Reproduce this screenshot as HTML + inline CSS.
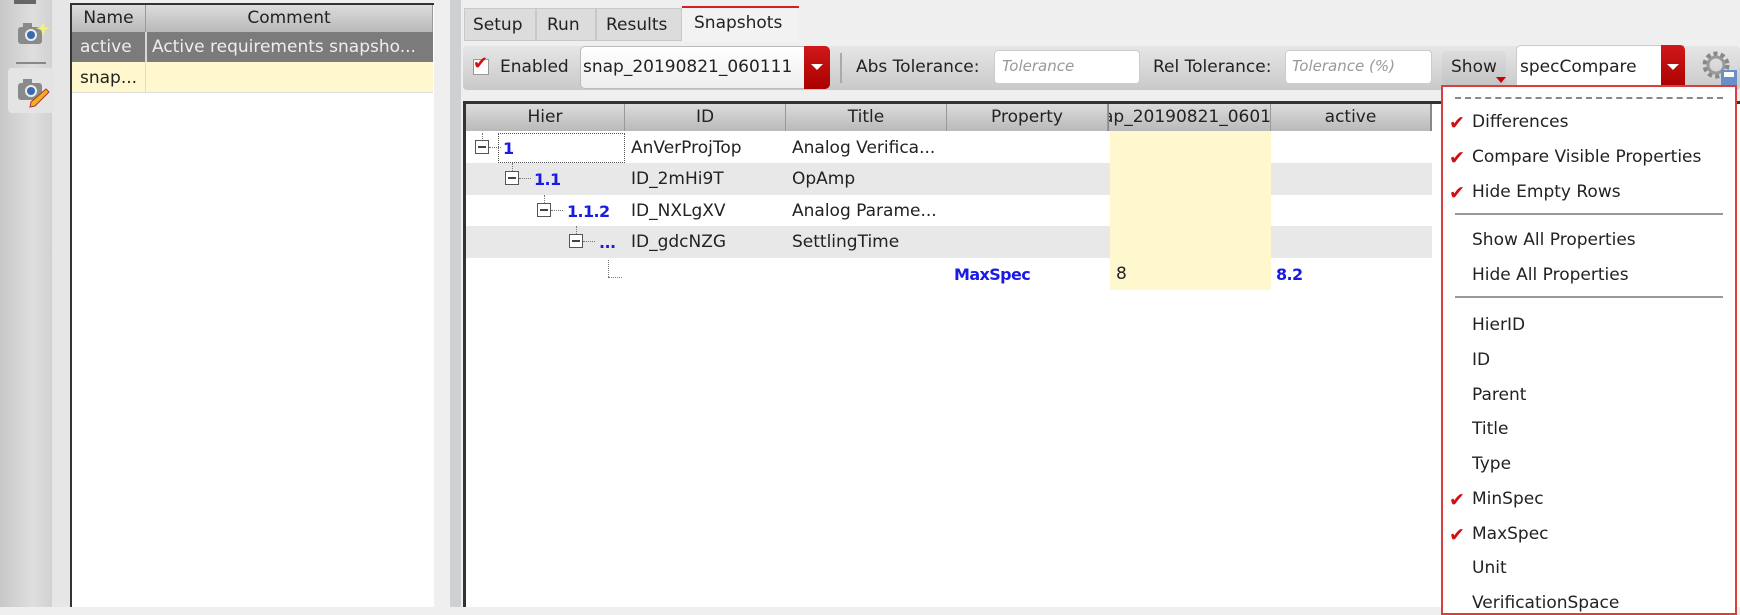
<!DOCTYPE html>
<html><head><meta charset="utf-8"><style>
*{box-sizing:border-box;margin:0;padding:0}
body{width:1740px;height:607px;overflow:hidden;background:#efefef;font-family:"DejaVu Sans","Liberation Sans",sans-serif;font-size:17px;color:#222;position:relative}
.a{position:absolute}
.t{position:absolute;white-space:nowrap;line-height:1}
.hd{background:linear-gradient(#dcdcdc,#b9b9b9);border-right:1px solid #999;text-align:center;line-height:27px;height:27px}
.b{color:#1a1ae6;font-weight:bold;font-size:16px;letter-spacing:-0.6px}
.box{position:absolute;width:14px;height:14px;border:1px solid #555;background:#fff}
.box:after{content:"";position:absolute;left:2px;right:2px;top:5px;height:2px;background:#444}
.dv{position:absolute;border-left:1px dotted #777}
.dh{position:absolute;border-top:1px dotted #777}
.mi{position:absolute;left:1472px;white-space:nowrap;line-height:1}
.ck{position:absolute;left:1449px;color:#d01010;font-size:19px;font-weight:bold}
.sep{position:absolute;left:1455px;width:268px;height:2px;background:#999}
</style></head><body>
<div class="a" style="left:0;top:0;width:55px;height:607px;background:linear-gradient(90deg,#c8c8c8,#dedede 60%,#cfcfcf)"></div>
<div class="a" style="left:52px;top:0;width:18px;height:607px;background:#e6e6e6"></div>
<div class="a" style="left:14px;top:0;width:22px;height:4px;background:#666"></div>
<svg class="a" style="left:16px;top:18px" width="36" height="32"><rect x="2" y="9" width="24" height="17" rx="3" fill="#8a8a8a"/><rect x="7" y="5" width="9" height="5" fill="#8a8a8a"/><circle cx="15" cy="17" r="6" fill="#eee"/><circle cx="15" cy="17" r="4" fill="#3a6ab0"/><path d="M27 4l2 5 5 1-5 2-2 6-2-6-5-2 5-1z" fill="#f4f080"/></svg>
<div class="a" style="left:16px;top:62px;width:30px;height:2px;background:#888"></div>
<div class="a" style="left:8px;top:68px;width:46px;height:45px;background:#e4e4e4;border-radius:4px"></div>
<svg class="a" style="left:16px;top:75px" width="36" height="34"><rect x="2" y="8" width="24" height="17" rx="3" fill="#8a8a8a"/><rect x="7" y="4" width="9" height="5" fill="#8a8a8a"/><circle cx="15" cy="16" r="6" fill="#eee"/><circle cx="15" cy="16" r="4" fill="#3a6ab0"/><path d="M30 14l3 3-14 14-5 1 1-5z" fill="#f0b020" stroke="#a33" stroke-width="1"/></svg>
<div class="a" style="left:70px;top:3px;width:364px;height:604px;background:#fff;border-left:2px solid #333;border-top:2px solid #333"></div>
<div class="a hd" style="left:72px;top:5px;width:74px">Name</div>
<div class="a hd" style="left:146px;top:5px;width:287px">Comment</div>
<div class="a" style="left:72px;top:32px;width:361px;height:30px;background:#7b7b7b"></div>
<div class="a" style="left:145px;top:32px;width:2px;height:61px;background:#d8d8d8"></div>
<div class="t" style="left:80px;top:39px;color:#eee">active</div>
<div class="t" style="left:152px;top:39px;color:#eee">Active requirements snapsho...</div>
<div class="a" style="left:72px;top:62px;width:361px;height:31px;background:#fff8cf;border-bottom:1px solid #ddd"></div>
<div class="a" style="left:145px;top:62px;width:1px;height:31px;background:#ddd"></div>
<div class="t" style="left:80px;top:70px">snap...</div>
<div class="a" style="left:434px;top:0;width:17px;height:607px;background:#efefef"></div>
<div class="a" style="left:450px;top:0;width:11px;height:607px;background:#cfd0d2"></div>
<div class="a" style="left:461px;top:0;width:1279px;height:607px;background:#efefef"></div>
<div class="a" style="left:464px;top:8px;width:72px;height:33px;background:#dcdcdc;border:1px solid #c8c8c8"></div>
<div class="a" style="left:536px;top:8px;width:60px;height:33px;background:#dcdcdc;border:1px solid #c8c8c8"></div>
<div class="a" style="left:596px;top:8px;width:86px;height:33px;background:#dcdcdc;border:1px solid #c8c8c8"></div>
<div class="a" style="left:682px;top:6px;width:117px;height:36px;background:#f2f2f2;border-top:2px solid #d42020"></div>
<div class="t" style="left:473px;top:17px">Setup</div>
<div class="t" style="left:547px;top:17px">Run</div>
<div class="t" style="left:606px;top:17px">Results</div>
<div class="t" style="left:694px;top:15px">Snapshots</div>
<div class="a" style="left:463px;top:46px;width:1277px;height:44px;background:linear-gradient(#e6e6e6,#c9c9c9);border-radius:4px"></div>
<div class="a" style="left:473px;top:59px;width:16px;height:16px;background:#fff;border:1px solid #999"></div>
<div class="t" style="left:473px;top:55px;color:#d01010;font-weight:bold;font-size:18px">✔</div>
<div class="t" style="left:500px;top:59px">Enabled</div>
<div class="a" style="left:580px;top:46px;width:250px;height:43px;background:linear-gradient(#fff,#eee);border:1px solid #bbb;border-radius:5px"></div>
<div class="a" style="left:804px;top:46px;width:26px;height:43px;background:linear-gradient(#d01818,#a00);border-radius:0 5px 5px 0"></div>
<div class="a" style="left:811px;top:64px;width:0;height:0;border-left:6px solid transparent;border-right:6px solid transparent;border-top:6px solid #fff"></div>
<div class="t" style="left:583px;top:59px">snap_20190821_060111</div>
<div class="a" style="left:840px;top:53px;width:2px;height:30px;background:#aaa"></div>
<div class="t" style="left:856px;top:59px">Abs Tolerance:</div>
<div class="a" style="left:994px;top:50px;width:146px;height:34px;background:#fff;border:1px solid #ccc;border-radius:4px"></div>
<div class="t" style="left:1002px;top:59px;color:#999;font-style:italic;font-size:15px">Tolerance</div>
<div class="t" style="left:1153px;top:59px">Rel Tolerance:</div>
<div class="a" style="left:1285px;top:50px;width:147px;height:34px;background:#fff;border:1px solid #ccc;border-radius:4px"></div>
<div class="t" style="left:1292px;top:59px;color:#999;font-style:italic;font-size:15px">Tolerance (%)</div>
<div class="a" style="left:1442px;top:51px;width:64px;height:34px;background:linear-gradient(#ddd,#c4c4c4);border-radius:5px"></div>
<div class="t" style="left:1451px;top:59px">Show</div>
<div class="a" style="left:1496px;top:77px;width:0;height:0;border-left:5px solid transparent;border-right:5px solid transparent;border-top:6px solid #c00"></div>
<div class="a" style="left:1516px;top:45px;width:168px;height:44px;background:#fff;border:1px solid #ccc;border-radius:5px 0 0 5px"></div>
<div class="a" style="left:1661px;top:45px;width:24px;height:44px;background:linear-gradient(#d01818,#a00);border-radius:0 5px 0 0"></div>
<div class="a" style="left:1667px;top:64px;width:0;height:0;border-left:6px solid transparent;border-right:6px solid transparent;border-top:6px solid #fff"></div>
<div class="t" style="left:1520px;top:59px">specCompare</div>
<svg class="a" style="left:1699px;top:48px" width="40" height="40"><circle cx="17" cy="17" r="11" fill="none" stroke="#888" stroke-width="5" stroke-dasharray="4 3"/><circle cx="17" cy="17" r="8" fill="none" stroke="#999" stroke-width="3"/><rect x="22" y="22" width="16" height="16" fill="#6a8ec8"/><rect x="25" y="24" width="10" height="5" fill="#fff"/></svg>
<div class="a" style="left:463px;top:101px;width:1277px;height:506px;background:#fff;border-left:3px solid #333;border-top:3px solid #333"></div>
<div class="a hd" style="left:466px;top:104px;width:159px">Hier</div>
<div class="a hd" style="left:625px;top:104px;width:161px">ID</div>
<div class="a hd" style="left:786px;top:104px;width:161px">Title</div>
<div class="a hd" style="left:947px;top:104px;width:161px">Property</div>
<div class="a hd" style="left:1108px;top:104px;width:163px;overflow:hidden;border-left:1px solid #888"><span style="position:relative;left:-6px">ap_20190821_0601</span></div>
<div class="a hd" style="left:1271px;top:104px;width:161px;border-right:2px solid #888">active</div>
<div class="a" style="left:466px;top:163px;width:966px;height:32px;background:#e8e8e8"></div>
<div class="a" style="left:466px;top:226px;width:966px;height:32px;background:#e8e8e8"></div>
<div class="a" style="left:1110px;top:131px;width:161px;height:159px;background:#fff8cf"></div>
<div class="a" style="left:498px;top:133px;width:127px;height:30px;border:1px dotted #555"></div>
<div class="dv" style="left:482px;top:133px;height:6px"></div>
<div class="box" style="left:475px;top:140px"></div><div class="dh" style="left:489px;top:147px;width:12px"></div>
<div class="dv" style="left:512px;top:163px;height:8px"></div>
<div class="box" style="left:505px;top:171px"></div><div class="dh" style="left:519px;top:178px;width:12px"></div>
<div class="dv" style="left:544px;top:195px;height:8px"></div>
<div class="box" style="left:537px;top:203px"></div><div class="dh" style="left:551px;top:210px;width:12px"></div>
<div class="dv" style="left:576px;top:226px;height:8px"></div>
<div class="box" style="left:569px;top:234px"></div><div class="dh" style="left:583px;top:241px;width:12px"></div>
<div class="dv" style="left:608px;top:260px;height:17px"></div><div class="dh" style="left:608px;top:277px;width:14px"></div>
<div class="t b" style="left:503px;top:141px">1</div>
<div class="t b" style="left:534px;top:172px">1.1</div>
<div class="t b" style="left:567px;top:204px">1.1.2</div>
<div class="t b" style="left:599px;top:235px">...</div>
<div class="t" style="left:631px;top:140px">AnVerProjTop</div>
<div class="t" style="left:631px;top:171px">ID_2mHi9T</div>
<div class="t" style="left:631px;top:203px">ID_NXLgXV</div>
<div class="t" style="left:631px;top:234px">ID_gdcNZG</div>
<div class="t" style="left:792px;top:140px">Analog Verifica...</div>
<div class="t" style="left:792px;top:171px">OpAmp</div>
<div class="t" style="left:792px;top:203px">Analog Parame...</div>
<div class="t" style="left:792px;top:234px">SettlingTime</div>
<div class="t b" style="left:954px;top:267px">MaxSpec</div>
<div class="t" style="left:1116px;top:266px">8</div>
<div class="t b" style="left:1276px;top:267px">8.2</div>
<div class="a" style="left:1441px;top:85px;width:296px;height:530px;background:#fff;border:2px solid #d64040"></div>
<div class="a" style="left:1455px;top:97px;width:268px;border-top:2px dashed #888"></div>
<div class="ck" style="top:112px">✔</div><div class="mi" style="top:114px">Differences</div>
<div class="ck" style="top:147px">✔</div><div class="mi" style="top:149px">Compare Visible Properties</div>
<div class="ck" style="top:182px">✔</div><div class="mi" style="top:184px">Hide Empty Rows</div>
<div class="sep" style="top:213px"></div>
<div class="mi" style="top:232px">Show All Properties</div>
<div class="mi" style="top:267px">Hide All Properties</div>
<div class="sep" style="top:296px"></div>
<div class="mi" style="top:317px">HierID</div>
<div class="mi" style="top:352px">ID</div>
<div class="mi" style="top:387px">Parent</div>
<div class="mi" style="top:421px">Title</div>
<div class="mi" style="top:456px">Type</div>
<div class="ck" style="top:489px">✔</div><div class="mi" style="top:491px">MinSpec</div>
<div class="ck" style="top:524px">✔</div><div class="mi" style="top:526px">MaxSpec</div>
<div class="mi" style="top:560px">Unit</div>
<div class="mi" style="top:595px">VerificationSpace</div>
</body></html>
